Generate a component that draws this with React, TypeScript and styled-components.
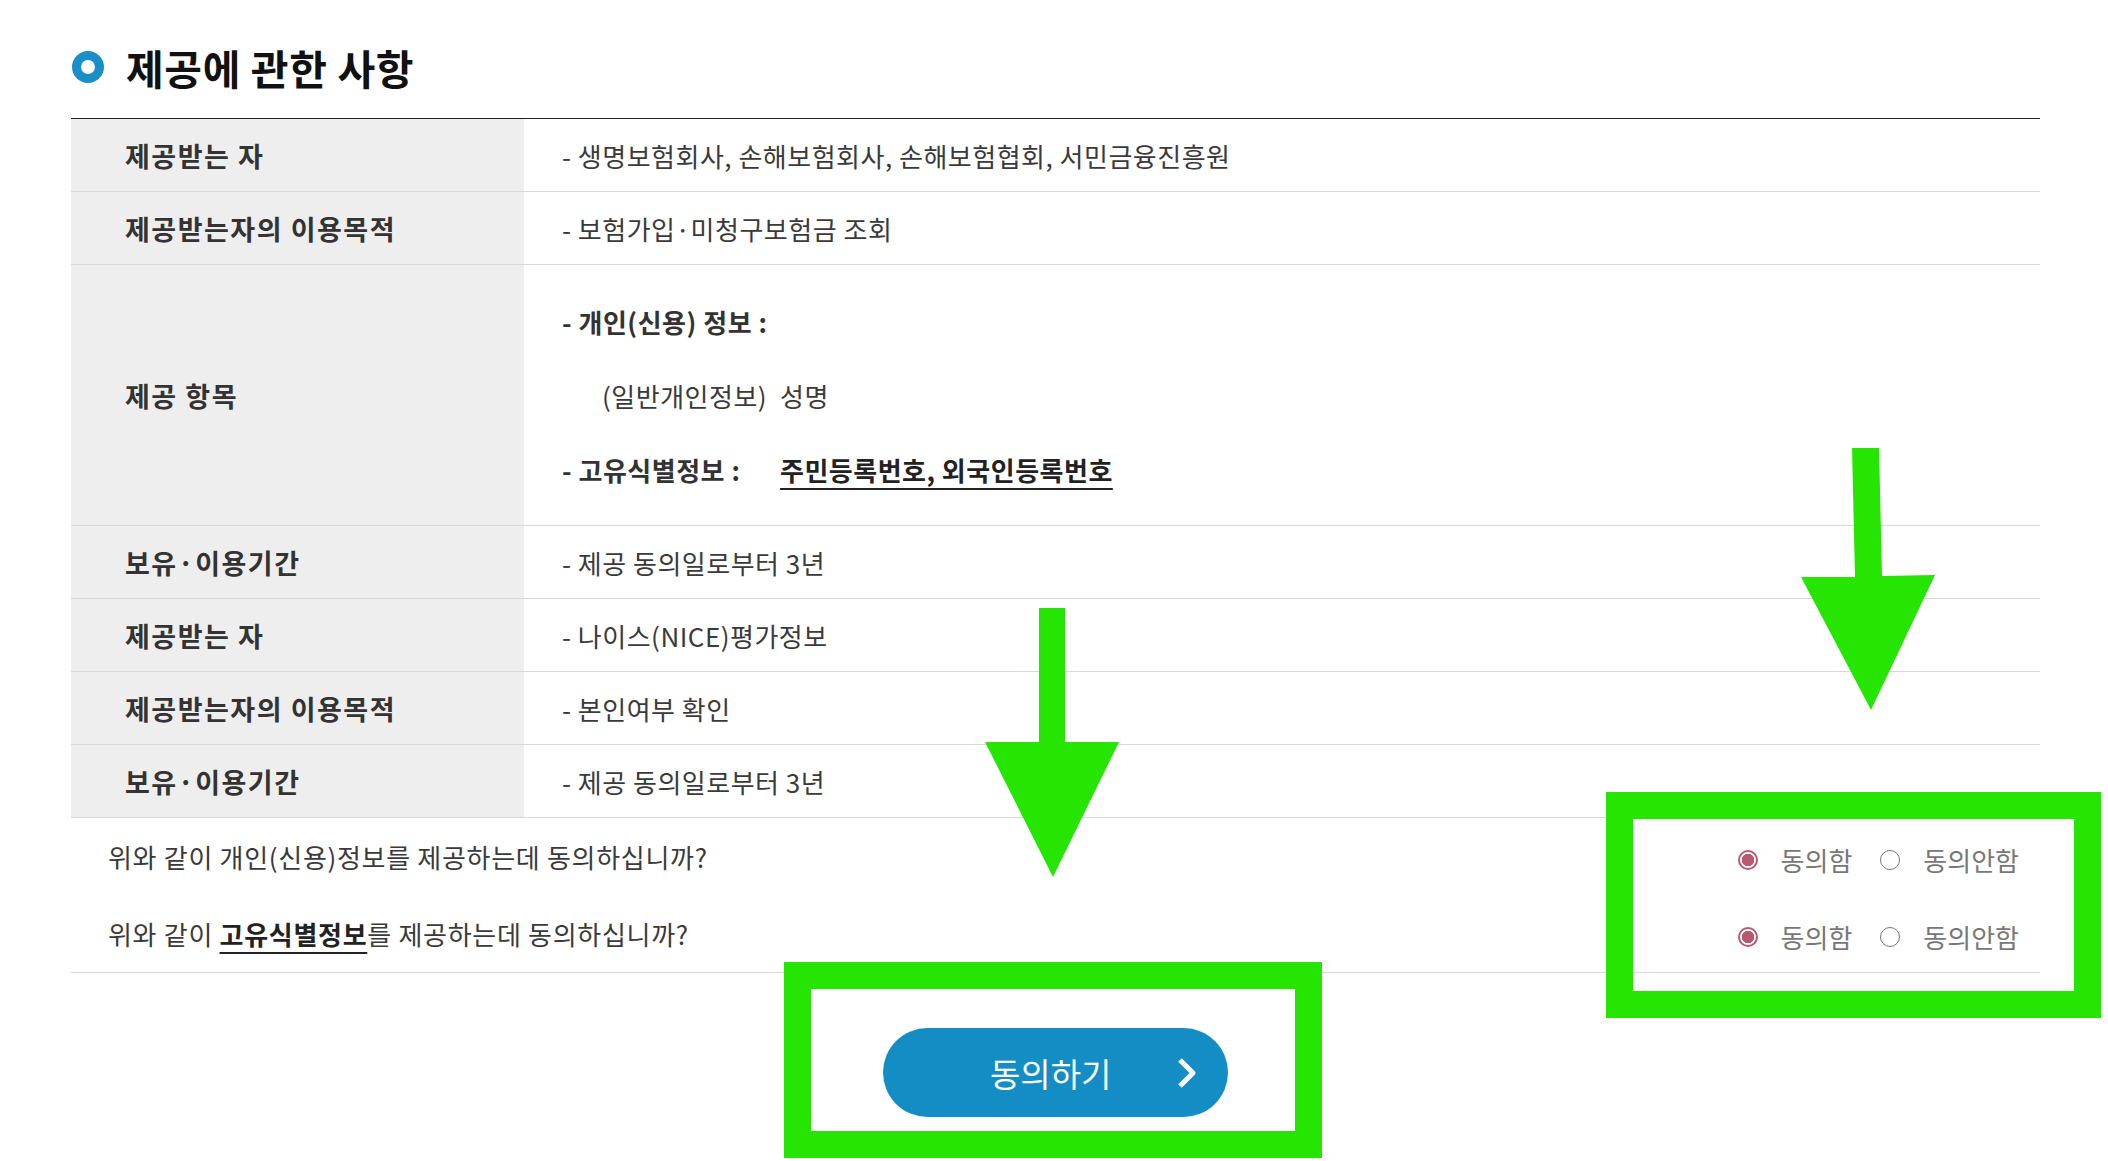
import { FC } from "react";
import styled, { createGlobalStyle } from "styled-components";

const GlobalStyle = createGlobalStyle`
  html, body {
    margin: 0;
    padding: 0;
    background: #fff;
    overflow: hidden;
  }
  body {
    font-family: "Noto Sans CJK KR", "Noto Sans", sans-serif;
    color: #333;
  }
`;

interface InfoRow {
  label: string;
  value: string;
}

const topRows: InfoRow[] = [
  { label: "제공받는 자", value: "- 생명보험회사, 손해보험회사, 손해보험협회, 서민금융진흥원" },
  { label: "제공받는자의 이용목적", value: "- 보험가입·미청구보험금 조회" },
];

const bottomRows: InfoRow[] = [
  { label: "보유·이용기간", value: "- 제공 동의일로부터 3년" },
  { label: "제공받는 자", value: "- 나이스(NICE)평가정보" },
  { label: "제공받는자의 이용목적", value: "- 본인여부 확인" },
  { label: "보유·이용기간", value: "- 제공 동의일로부터 3년" },
];

const RadioPair: FC<{ name: string }> = ({ name }) => (
  <RadioGroup>
    <Option>
      <RadioDot $checked />
      동의함
    </Option>
    <Option>
      <RadioDot />
      동의안함
    </Option>
    <input type="hidden" name={name} value="Y" />
  </RadioGroup>
);

const App: FC = () => {
  return (
    <>
      <GlobalStyle />
      <Page>
        <Heading>
          <Bullet />
          <Title>제공에 관한 사항</Title>
        </Heading>

        <Table>
          {topRows.map((row, i) => (
            <Row key={"t" + i}>
              <Label>{row.label}</Label>
              <Value>{row.value}</Value>
            </Row>
          ))}
          <Row $tall>
            <Label>제공 항목</Label>
            <Value $stack>
              <Line>
                <strong>- 개인(신용) 정보 :</strong>
              </Line>
              <Line>
                <Term $indent>(일반개인정보)</Term>
                <span>성명</span>
              </Line>
              <Line>
                <Term>
                  <strong>- 고유식별정보 :</strong>
                </Term>
                <Emph>주민등록번호, 외국인등록번호</Emph>
              </Line>
            </Value>
          </Row>
          {bottomRows.map((row, i) => (
            <Row key={"b" + i}>
              <Label>{row.label}</Label>
              <Value>{row.value}</Value>
            </Row>
          ))}
        </Table>

        <Questions>
          <Question>
            <QText>위와 같이 개인(신용)정보를 제공하는데 동의하십니까?</QText>
            <RadioPair name="agree1" />
          </Question>
          <Question>
            <QText>
              위와 같이 <Emph>고유식별정보</Emph>를 제공하는데 동의하십니까?
            </QText>
            <RadioPair name="agree2" />
          </Question>
        </Questions>

        <Actions>
          <AgreeButton type="button">
            <span>동의하기</span>
            <svg width="22" height="34" viewBox="0 0 22 34">
              <polyline
                points="4,4 17,17 4,30"
                fill="none"
                stroke="#fff"
                strokeWidth="5"
                strokeLinejoin="round"
              />
            </svg>
          </AgreeButton>
        </Actions>
      </Page>

      <Annotations width="2108" height="1161" viewBox="0 0 2108 1161">
        <rect x="1619.5" y="805.5" width="468" height="199" fill="none" stroke="#27e502" strokeWidth="27" />
        <rect x="797.5" y="975.5" width="511" height="169" fill="none" stroke="#27e502" strokeWidth="27" />
        <polygon
          points="1039,608 1065,608 1065,742 1119,742 1053,877 985,742 1039,742"
          fill="#27e502"
        />
        <polygon
          points="1852,448 1879,448 1882,576 1935,575 1871,710 1801,577 1855,577"
          fill="#27e502"
        />
      </Annotations>
    </>
  );
};

export default App;

const Page = styled.main`
  padding: 0 68px 0 71px;
`;

const Heading = styled.h2`
  display: flex;
  align-items: center;
  gap: 22px;
  height: 72px;
  margin: 0 0 15px;
  padding-top: 31px;
`;

const Bullet = styled.span`
  box-sizing: border-box;
  width: 32px;
  height: 32px;
  margin-left: 1px;
  border: 9px solid #1a8fc7;
  border-radius: 50%;
`;

const Title = styled.span`
  font-size: 41px;
  font-weight: 700;
  color: #111;
  letter-spacing: 0.6px;
`;

const Table = styled.div`
  border-top: 1px solid #222;
`;

const Row = styled.div<{ $tall?: boolean }>`
  display: grid;
  grid-template-columns: 453px 1fr;
  min-height: ${(p) => (p.$tall ? 260 : 72)}px;
  border-bottom: 1px solid #d8d8d8;
`;

const Label = styled.div`
  display: flex;
  align-items: center;
  padding-left: 54px;
  background: #eeeeee;
  font-size: 27px;
  font-weight: 700;
  letter-spacing: 1.5px;
  color: #333;
`;

const Value = styled.div<{ $stack?: boolean }>`
  display: flex;
  flex-direction: ${(p) => (p.$stack ? "column" : "row")};
  justify-content: ${(p) => (p.$stack ? "center" : "flex-start")};
  align-items: ${(p) => (p.$stack ? "flex-start" : "center")};
  padding-left: 38px;
  font-size: 26px;
  letter-spacing: 0.5px;
  color: #3a3a3a;

  strong {
    font-weight: 700;
    color: #333;
  }
`;

const Line = styled.div`
  display: flex;
  align-items: center;
  height: 74px;
`;

const Term = styled.span<{ $indent?: boolean }>`
  box-sizing: border-box;
  width: 218px;
  padding-left: ${(p) => (p.$indent ? 40 : 0)}px;
`;

const Emph = styled.span`
  font-weight: 700;
  color: #222;
  text-decoration: underline;
  text-decoration-thickness: 2px;
  text-underline-offset: 7px;
`;

const Questions = styled.div`
  border-bottom: 1px solid #d8d8d8;
`;

const Question = styled.div`
  display: flex;
  align-items: center;
  justify-content: space-between;
  height: 77px;
  padding: 0 21px 0 37px;
`;

const QText = styled.p`
  margin: 0;
  font-size: 26px;
  letter-spacing: 0.7px;
  color: #3a3a3a;
`;

const RadioGroup = styled.div`
  display: flex;
  align-items: center;
  gap: 28px;
  padding-top: 6px;
`;

const Option = styled.label`
  display: flex;
  align-items: center;
  gap: 23px;
  font-size: 26px;
  color: #777;
`;

const RadioDot = styled.span<{ $checked?: boolean }>`
  box-sizing: border-box;
  width: 20px;
  height: 20px;
  border-radius: 50%;
  border: ${(p) => (p.$checked ? "2px solid #b9596f" : "1.5px solid #777")};
  background: ${(p) =>
    p.$checked ? "radial-gradient(circle, #b9596f 0 6px, #fff 6.5px)" : "#fff"};
`;

const Actions = styled.div`
  display: flex;
  justify-content: center;
  padding-top: 55px;
`;

const AgreeButton = styled.button`
  display: flex;
  align-items: center;
  box-sizing: border-box;
  width: 345px;
  height: 89px;
  padding: 0 30px 0 107px;
  border: 0;
  border-radius: 45px;
  background: #138dc4;
  color: #fff;
  font-family: "Noto Sans CJK KR", "Noto Sans", sans-serif;
  font-size: 33px;
  cursor: pointer;

  svg {
    margin-left: auto;
  }
`;

const Annotations = styled.svg`
  position: absolute;
  top: 0;
  left: 0;
  pointer-events: none;
`;
